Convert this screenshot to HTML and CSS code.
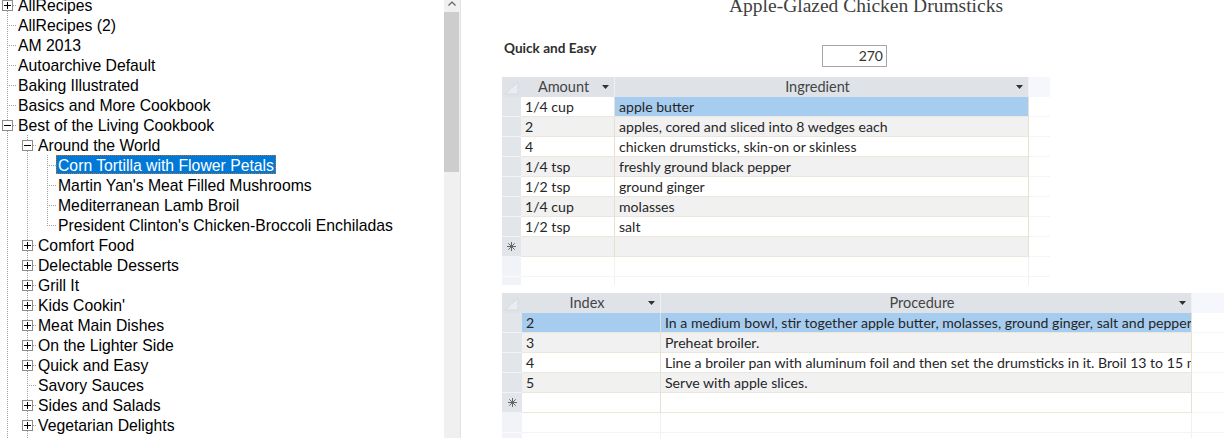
FILE: index.html
```html
<!DOCTYPE html>
<html lang="en">
<head>
<meta charset="utf-8">
<title>Recipes</title>
<link rel="stylesheet" href="styles.css">
</head>
<body>
<aside class="tree-pane">
  <div class="tree">
    <div class="node"><span class="conn"><span class="exp plus"></span></span><span class="label">AllRecipes</span></div>
    <div class="node"><span class="conn"></span><span class="label">AllRecipes (2)</span></div>
    <div class="node"><span class="conn"></span><span class="label">AM 2013</span></div>
    <div class="node"><span class="conn"></span><span class="label">Autoarchive Default</span></div>
    <div class="node"><span class="conn"></span><span class="label">Baking Illustrated</span></div>
    <div class="node"><span class="conn"></span><span class="label">Basics and More Cookbook</span></div>
    <div class="node"><span class="conn"><span class="exp"></span></span><span class="label">Best of the Living Cookbook</span></div>
    <div class="node"><span class="ind v"></span><span class="conn"><span class="exp"></span></span><span class="label">Around the World</span></div>
    <div class="node"><span class="ind v"></span><span class="ind v"></span><span class="conn"></span><span class="label sel">Corn Tortilla with Flower Petals</span></div>
    <div class="node"><span class="ind v"></span><span class="ind v"></span><span class="conn"></span><span class="label">Martin Yan's Meat Filled Mushrooms</span></div>
    <div class="node"><span class="ind v"></span><span class="ind v"></span><span class="conn"></span><span class="label">Mediterranean Lamb Broil</span></div>
    <div class="node"><span class="ind v"></span><span class="ind v"></span><span class="conn end"></span><span class="label">President Clinton's Chicken-Broccoli Enchiladas</span></div>
    <div class="node"><span class="ind v"></span><span class="conn"><span class="exp plus"></span></span><span class="label">Comfort Food</span></div>
    <div class="node"><span class="ind v"></span><span class="conn"><span class="exp plus"></span></span><span class="label">Delectable Desserts</span></div>
    <div class="node"><span class="ind v"></span><span class="conn"><span class="exp plus"></span></span><span class="label">Grill It</span></div>
    <div class="node"><span class="ind v"></span><span class="conn"><span class="exp plus"></span></span><span class="label">Kids Cookin'</span></div>
    <div class="node"><span class="ind v"></span><span class="conn"><span class="exp plus"></span></span><span class="label">Meat Main Dishes</span></div>
    <div class="node"><span class="ind v"></span><span class="conn"><span class="exp plus"></span></span><span class="label">On the Lighter Side</span></div>
    <div class="node"><span class="ind v"></span><span class="conn"><span class="exp plus"></span></span><span class="label">Quick and Easy</span></div>
    <div class="node"><span class="ind v"></span><span class="conn"></span><span class="label">Savory Sauces</span></div>
    <div class="node"><span class="ind v"></span><span class="conn"><span class="exp plus"></span></span><span class="label">Sides and Salads</span></div>
    <div class="node"><span class="ind v"></span><span class="conn"><span class="exp plus"></span></span><span class="label">Vegetarian Delights</span></div>
    <div class="node"><span class="ind v"></span><span class="ind v"></span></div>
  </div>
</aside>
<div class="vscroll">
  <div class="up"><svg width="8" height="5" viewBox="0 0 8 5"><polyline points="0.5,4.5 4,1 7.5,4.5" fill="none" stroke="#606060" stroke-width="1.2"/></svg></div>
  <div class="thumb"></div>
</div>
<main class="detail">
  <h1 class="title">Apple-Glazed Chicken Drumsticks</h1>
  <div class="meta">
    <span class="category">Quick and Easy</span>
    <span class="time">270</span>
  </div>

  <div class="sheet ingredients">
    <div class="srow hrow">
      <span class="cell rs corner"><svg width="16" height="16" viewBox="0 0 16 16"><polygon points="2,15 15,3 15,15" fill="#e9ecf0" stroke="#cdd2d8" stroke-width="0.6"/></svg></span>
      <span class="cell w-amt"><span class="htext">Amount</span><svg class="dd" width="7" height="4" viewBox="0 0 7 4"><polygon points="0,0 7,0 3.5,4" fill="#333"/></svg></span>
      <span class="cell w-ing"><span class="htext">Ingredient</span><svg class="dd" width="7" height="4" viewBox="0 0 7 4"><polygon points="0,0 7,0 3.5,4" fill="#333"/></svg></span>
      <span class="cell pad"></span>
    </div>
    <div class="srow"><span class="cell rs"></span><span class="cell w-amt">1/4 cup</span><span class="cell w-ing hl">apple butter</span><span class="cell pad"></span></div>
    <div class="srow alt"><span class="cell rs"></span><span class="cell w-amt">2</span><span class="cell w-ing">apples, cored and sliced into 8 wedges each</span><span class="cell pad"></span></div>
    <div class="srow"><span class="cell rs"></span><span class="cell w-amt">4</span><span class="cell w-ing">chicken drumsticks, skin-on or skinless</span><span class="cell pad"></span></div>
    <div class="srow alt"><span class="cell rs"></span><span class="cell w-amt">1/4 tsp</span><span class="cell w-ing">freshly ground black pepper</span><span class="cell pad"></span></div>
    <div class="srow"><span class="cell rs"></span><span class="cell w-amt">1/2 tsp</span><span class="cell w-ing">ground ginger</span><span class="cell pad"></span></div>
    <div class="srow alt"><span class="cell rs"></span><span class="cell w-amt">1/4 cup</span><span class="cell w-ing">molasses</span><span class="cell pad"></span></div>
    <div class="srow"><span class="cell rs"></span><span class="cell w-amt">1/2 tsp</span><span class="cell w-ing">salt</span><span class="cell pad"></span></div>
    <div class="srow alt"><span class="cell rs star"><svg width="9" height="9" viewBox="0 0 9 9"><path d="M4.5 0v9M0 4.5h9M1.3 1.3l6.4 6.4M7.7 1.3l-6.4 6.4" stroke="#666" stroke-width="1"/></svg></span><span class="cell w-amt"></span><span class="cell w-ing"></span><span class="cell pad"></span></div>
    <div class="srow ghost"><span class="cell rs"></span><span class="cell w-amt"></span><span class="cell w-ing"></span><span class="cell pad"></span></div>
    <div class="srow ghost"><span class="cell rs"></span><span class="cell w-amt"></span><span class="cell w-ing"></span><span class="cell pad"></span></div>
  </div>

  <div class="sheet procedure">
    <div class="srow hrow">
      <span class="cell rs2 corner"><svg width="16" height="16" viewBox="0 0 16 16"><polygon points="2,15 15,3 15,15" fill="#e9ecf0" stroke="#cdd2d8" stroke-width="0.6"/></svg></span>
      <span class="cell w-idx"><span class="htext">Index</span><svg class="dd" width="7" height="4" viewBox="0 0 7 4"><polygon points="0,0 7,0 3.5,4" fill="#333"/></svg></span>
      <span class="cell w-proc"><span class="htext">Procedure</span><svg class="dd" width="7" height="4" viewBox="0 0 7 4"><polygon points="0,0 7,0 3.5,4" fill="#333"/></svg></span>
      <span class="cell pad grow"></span>
    </div>
    <div class="srow"><span class="cell rs2"></span><span class="cell w-idx hl">2</span><span class="cell w-proc hl">In a medium bowl, stir together apple butter, molasses, ground ginger, salt and pepper. Brush the mixture over the drumsticks.</span><span class="cell pad grow"></span></div>
    <div class="srow alt"><span class="cell rs2"></span><span class="cell w-idx">3</span><span class="cell w-proc">Preheat broiler.</span><span class="cell pad grow"></span></div>
    <div class="srow"><span class="cell rs2"></span><span class="cell w-idx">4</span><span class="cell w-proc">Line a broiler pan with aluminum foil and then set the drumsticks in it. Broil 13 to 15 minutes, turning once.</span><span class="cell pad grow"></span></div>
    <div class="srow alt"><span class="cell rs2"></span><span class="cell w-idx">5</span><span class="cell w-proc">Serve with apple slices.</span><span class="cell pad grow"></span></div>
    <div class="srow"><span class="cell rs2 star"><svg width="9" height="9" viewBox="0 0 9 9"><path d="M4.5 0v9M0 4.5h9M1.3 1.3l6.4 6.4M7.7 1.3l-6.4 6.4" stroke="#666" stroke-width="1"/></svg></span><span class="cell w-idx"></span><span class="cell w-proc"></span><span class="cell pad grow"></span></div>
    <div class="srow ghost"><span class="cell rs2"></span><span class="cell w-idx"></span><span class="cell w-proc"></span><span class="cell pad grow"></span></div>
    <div class="srow ghost"><span class="cell rs2"></span><span class="cell w-idx"></span><span class="cell w-proc"></span><span class="cell pad grow"></span></div>
  </div>
</main>
</body>
</html>
```

FILE: styles.css
```css
* { box-sizing: border-box; }

html, body {
  margin: 0;
  padding: 0;
}

body {
  width: 1224px;
  height: 438px;
  overflow: hidden;
  display: flex;
  background: #fff;
}

/* ---------- tree ---------- */
.tree-pane {
  width: 444px;
  flex: none;
  overflow: hidden;
  font: 15.75px/19px "Liberation Sans", Arial, sans-serif;
  color: #000;
}

.tree {
  margin-top: -5px;
}

.node {
  display: flex;
  height: 20px;
}

.ind {
  width: 20px;
  height: 20px;
  flex: none;
}

.ind.v {
  background: repeating-linear-gradient(to bottom, #a0a0a0 0 1px, transparent 1px 2px) 7px 0 / 1px 20px no-repeat;
}

.conn {
  width: 16px;
  height: 20px;
  flex: none;
  padding: 5px 0 0 2px;
  background:
    repeating-linear-gradient(to bottom, #a0a0a0 0 1px, transparent 1px 2px) 7px 0 / 1px 20px no-repeat,
    repeating-linear-gradient(to right, #a0a0a0 0 1px, transparent 1px 2px) 9px 10px / 7px 1px no-repeat;
}

.conn.end {
  background-size: 1px 11px, 7px 1px;
}

.exp {
  display: block;
  width: 11px;
  height: 11px;
  border: 1px solid #8c8c8c;
  background: linear-gradient(#000, #000) center / 7px 1px no-repeat, #fff;
}

.exp.plus {
  background:
    linear-gradient(#000, #000) center / 7px 1px no-repeat,
    linear-gradient(#000, #000) center / 1px 7px no-repeat,
    #fff;
}

.label {
  height: 19px;
  padding: 1px 2px 0;
  line-height: 19px;
  white-space: nowrap;
}

.label.sel {
  background: #0078d7;
  color: #fff;
  outline: 1px dotted #c4701f;
  outline-offset: -1px;
}

/* ---------- scrollbar ---------- */
.vscroll {
  width: 17px;
  flex: none;
  height: 438px;
  background: #f0f0f0;
  border-right: 1px solid #e2e2e2;
  display: flex;
  flex-direction: column;
}

.up {
  height: 12px;
  display: flex;
  justify-content: center;
  padding: 1px 1px 0 0;
}

.up svg { display: block; }

.thumb {
  height: 160px;
  margin-right: 1px;
  background: #cdcdcd;
}

/* ---------- detail ---------- */
.detail {
  flex: 1;
  min-width: 0;
  height: 438px;
  padding-left: 41px;
  display: flex;
  flex-direction: column;
  align-items: flex-start;
  overflow: hidden;
  font-family: Lato, "Open Sans", sans-serif;
}

.title {
  margin: -4px 0 0 227px;
  font: 400 19.5px/20px "Liberation Serif", "Times New Roman", serif;
  color: #404040;
  white-space: nowrap;
}

.meta {
  display: flex;
  align-items: flex-start;
  margin-top: 24px;
}

.category {
  width: 320px;
  padding-left: 2px;
  font: 700 13.6px/16px Lato, sans-serif;
  color: #2e2e2e;
}

.time {
  margin-top: 5px;
  width: 65px;
  height: 22px;
  border: 1px solid #a6a6a6;
  padding-right: 3px;
  text-align: right;
  font: 14px/20px Lato, sans-serif;
  color: #333;
}

.sheet {
  display: flex;
  flex-direction: column;
  overflow: hidden;
  font: 14.1px Lato, sans-serif;
  color: #262626;
}

.ingredients {
  width: 548px;
  height: 208px;
  margin-top: 10px;
}

.procedure {
  width: 722px;
  height: 145px;
  margin-top: 8px;
}

.srow {
  display: flex;
  height: 20px;
  flex: none;
}

.srow.alt {
  background: #f1f1f1;
}

.cell {
  flex: none;
  height: 20px;
  padding: 0 4px;
  line-height: 19px;
  white-space: nowrap;
  overflow: hidden;
  border-bottom: 1px solid #ebe7db;
  border-right: 1px solid #e5e1d3;
}

.cell.hl {
  background: #a6cdf0;
}

.rs, .rs2 {
  background: #e2e5ea;
  border-right: 0;
  border-bottom: 1px solid #f2f3f6;
  padding: 0;
}

.rs { width: 19px; }
.rs2 { width: 20px; }

.star {
  display: flex;
  align-items: center;
  justify-content: center;
}

.star svg { display: block; }

.w-amt { width: 94px; }
.w-ing { width: 414px; }
.w-idx { width: 139px; }
.w-proc { width: 531px; }

.pad {
  width: 21px;
  background: #fff;
  border-right: 0;
  border-bottom: 1px solid #f5f5f5;
}

.pad.grow {
  flex: 1;
}

/* header */
.hrow .cell {
  background: #dfe3e8;
  border-bottom: 1px solid #dfe3e8;
  border-right: 1px solid #eef0f3;
  display: grid;
  grid-template-columns: 1fr auto;
  align-items: center;
  padding: 0 5px 0 4px;
  color: #444;
  font-size: 14.5px;
}

.hrow .htext {
  text-align: center;
}

.hrow .dd {
  display: block;
}

.hrow .corner {
  display: block;
  padding: 0;
  border-right: 0;
}

.hrow .corner svg { display: block; margin: 2px 0 0 1px; }

.hrow .pad {
  background: #f5f7fd;
  border: 0;
}

/* empty rows below the data */
.srow.ghost .cell {
  border-bottom-color: #f4f4f4;
  border-right-color: #f3f1ec;
}

.srow.ghost .rs,
.srow.ghost .rs2 {
  background: #f1f3f8;
  border-bottom-color: #fafafa;
}
```
